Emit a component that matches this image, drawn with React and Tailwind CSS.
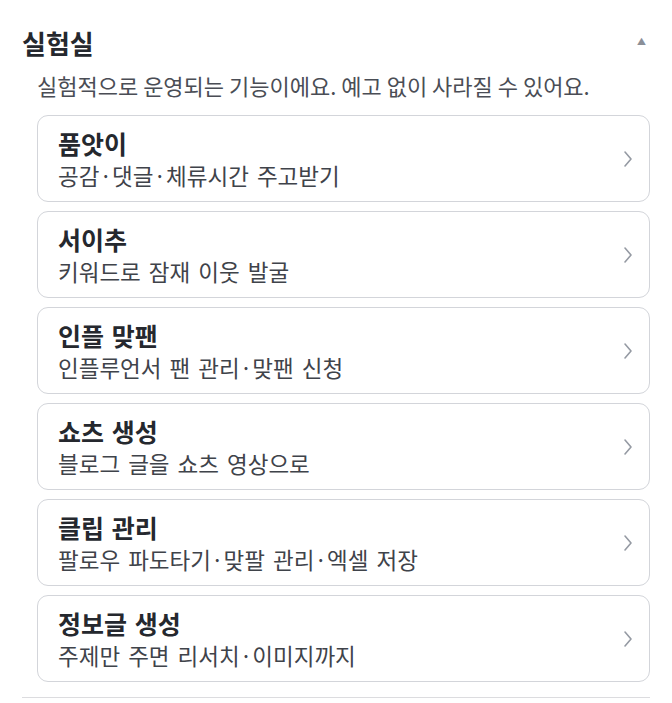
const labs = [
  { title: '품앗이', desc: '공감·댓글·체류시간 주고받기' },
  { title: '서이추', desc: '키워드로 잠재 이웃 발굴' },
  { title: '인플 맞팬', desc: '인플루언서 팬 관리·맞팬 신청' },
  { title: '쇼츠 생성', desc: '블로그 글을 쇼츠 영상으로' },
  { title: '클립 관리', desc: '팔로우 파도타기·맞팔 관리·엑셀 저장' },
  { title: '정보글 생성', desc: '주제만 주면 리서치·이미지까지' }
]

function Chevron() {
  return (
    <svg width="10" height="18" viewBox="0 0 10 18" fill="none" className="shrink-0">
      <polyline points="2,2 8,9 2,16" stroke="#959aa3" strokeWidth="1.6" strokeLinecap="round" strokeLinejoin="round" />
    </svg>
  )
}

function App() {
  return (
    <div
      className="w-[672px] h-[703px] bg-white overflow-hidden"
      style={{ fontFamily: '"Noto Sans CJK KR", "Noto Sans", sans-serif' }}
    >
      <div className="mx-[22px] pt-[26px] pb-[15px] border-b border-[#dcdcdf]">
        {/* Header */}
        <div className="flex items-center justify-between h-[32px]">
          <h2 className="text-[26px] font-bold text-[#25282e]">실험실</h2>
          <span className="mr-[4px] text-[9px] text-[#8b8f98]">▲</span>
        </div>

        <p className="mt-[12px] pl-[15px] text-[22px] leading-[30px] text-[#4a4d55]">
          실험적으로 운영되는 기능이에요. 예고 없이 사라질 수 있어요.
        </p>

        {/* Lab list */}
        <div className="mt-[15px] ml-[15px] flex flex-col gap-[9px]">
          {labs.map(item => (
            <div
              key={item.title}
              className="flex items-center justify-between h-[87px] pl-[20px] pr-[16px] rounded-[11px] border border-[#d3d5da] bg-white"
            >
              <div className="flex flex-col">
                <span className="text-[25px] font-bold leading-[32px] text-[#25282e] [word-spacing:2px]">{item.title}</span>
                <span className="text-[22.5px] leading-[32px] text-[#3f434a] [word-spacing:3px]">{item.desc}</span>
              </div>
              <Chevron />
            </div>
          ))}
        </div>
      </div>
    </div>
  )
}

export default App
